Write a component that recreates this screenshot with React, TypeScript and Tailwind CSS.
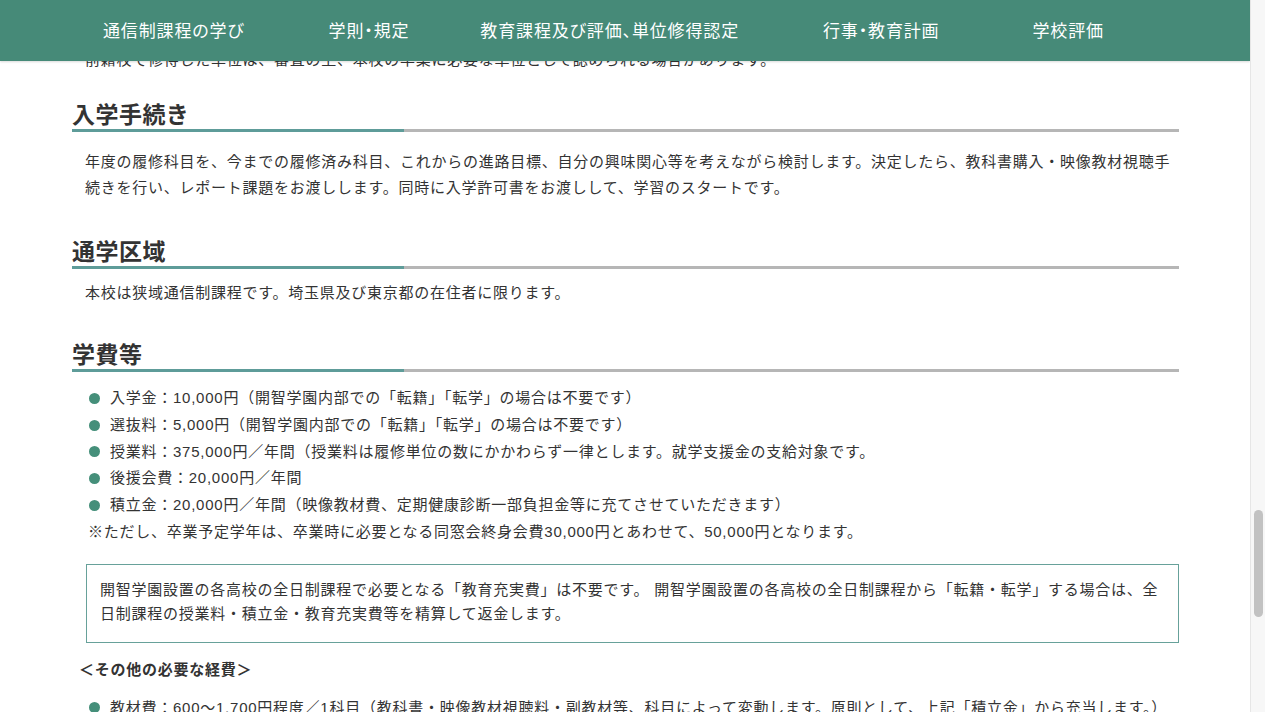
import React from "react";

// nav labels with the spacing before each one
const NAV_ITEMS = [
  { label: "通信制課程の学び", gap: "ml-0" },
  { label: "学則・規定", gap: "ml-[84px]" },
  { label: "教育課程及び評価、単位修得認定", gap: "ml-[71px]" },
  { label: "行事・教育計画", gap: "ml-[84px]" },
  { label: "学校評価", gap: "ml-[93px]" },
];

const FEES = [
  "入学金：10,000円（開智学園内部での「転籍」「転学」の場合は不要です）",
  "選抜料：5,000円（開智学園内部での「転籍」「転学」の場合は不要です）",
  "授業料：375,000円／年間（授業料は履修単位の数にかかわらず一律とします。就学支援金の支給対象です。",
  "後援会費：20,000円／年間",
  "積立金：20,000円／年間（映像教材費、定期健康診断一部負担金等に充てさせていただきます）",
];

const bodyFont = "font-['Liberation_Sans','Noto_Sans_CJK_JP',sans-serif]";

function SectionTitle({ children, className = "" }: { children: React.ReactNode; className?: string }) {
  return (
    <div className={className}>
      <h2 className="text-[23px] leading-[27px] font-bold tracking-[0.02em] text-[#333]">{children}</h2>
      <div className="flex h-[3px]">
        <div className="w-[332px] bg-[#5e9c99]" />
        <div className="flex-1 bg-[#b6b6b6]" />
      </div>
    </div>
  );
}

function Bullet({ children }: { children: React.ReactNode }) {
  return (
    <li className="flex items-center whitespace-nowrap">
      <span className="w-[11px] h-[11px] rounded-full bg-[#458f7a] mr-[10px] shrink-0" />
      <span>{children}</span>
    </li>
  );
}

export default function App() {
  return (
    <div className={`h-[712px] w-full flex overflow-hidden bg-white ${bodyFont}`}>
      <div className="relative flex-1 overflow-hidden">
        {/* fixed site navigation */}
        <header className="absolute top-0 left-0 right-0 z-10 h-[61px] bg-[#468a78] shadow-[0_1px_2px_rgba(0,0,0,0.15)]">
          <nav className="h-full flex items-center pl-[103px] pb-[2px] font-['Noto_Sans_CJK_JP',sans-serif] text-[17px] tracking-[0.05em] text-white [font-feature-settings:'palt']">
            {NAV_ITEMS.map((item) => (
              <a key={item.label} className={`${item.gap} leading-none whitespace-nowrap cursor-pointer`}>
                {item.label}
              </a>
            ))}
          </nav>
        </header>

        <main className="pt-[47px] pl-[72px] pr-[71px] text-[15px] tracking-[0.05em] text-[#333]">
          <p className="pl-[13px] leading-[26px]">
            前籍校で修得した単位は、審査の上、本校の卒業に必要な単位として認められる場合があります。
          </p>

          <SectionTitle className="mt-[29px]">入学手続き</SectionTitle>
          <p className="mt-[17px] pl-[13px] leading-[26px]">
            年度の履修科目を、今までの履修済み科目、これからの進路目標、自分の興味関心等を考えながら検討します。決定したら、教科書購入・映像教材視聴手続きを行い、レポート課題をお渡しします。同時に入学許可書をお渡しして、学習のスタートです。
          </p>

          <SectionTitle className="mt-[38px]">通学区域</SectionTitle>
          <p className="mt-[11px] pl-[13px] leading-[26px]">本校は狭域通信制課程です。埼玉県及び東京都の在住者に限ります。</p>

          <SectionTitle className="mt-[36px]">学費等</SectionTitle>
          <ul className="mt-[13px] pl-[17px] leading-[26.8px]">
            {FEES.map((fee) => (
              <Bullet key={fee}>{fee}</Bullet>
            ))}
          </ul>
          <p className="pl-[16px] leading-[26px]">
            ※ただし、卒業予定学年は、卒業時に必要となる同窓会終身会費30,000円とあわせて、50,000円となります。
          </p>

          <div className="mt-[19px] ml-[14px] border border-[#67a19a] px-[13px] pt-[13px] pb-[16px] leading-[24px]">
            開智学園設置の各高校の全日制課程で必要となる「教育充実費」は不要です。 開智学園設置の各高校の全日制課程から「転籍・転学」する場合は、全日制課程の授業料・積立金・教育充実費等を精算して返金します。
          </div>

          <p className="mt-[14px] pl-[7px] leading-[26px] font-bold">＜その他の必要な経費＞</p>
          <ul className="mt-[11px] pl-[17px] leading-[27px]">
            <Bullet>
              教材費：600〜1,700円程度／1科目（教科書・映像教材視聴料・副教材等、科目によって変動します。原則として、上記「積立金」から充当します。）
            </Bullet>
          </ul>
        </main>
      </div>

      {/* page scrollbar */}
      <div className="w-[15px] shrink-0 border-l border-[#e6e6e6] bg-[#f7f7f7] flex flex-col items-center">
        <div className="mt-[510px] h-[107px] w-[9px] rounded-full bg-[#c2c2c2]" />
      </div>
    </div>
  );
}
